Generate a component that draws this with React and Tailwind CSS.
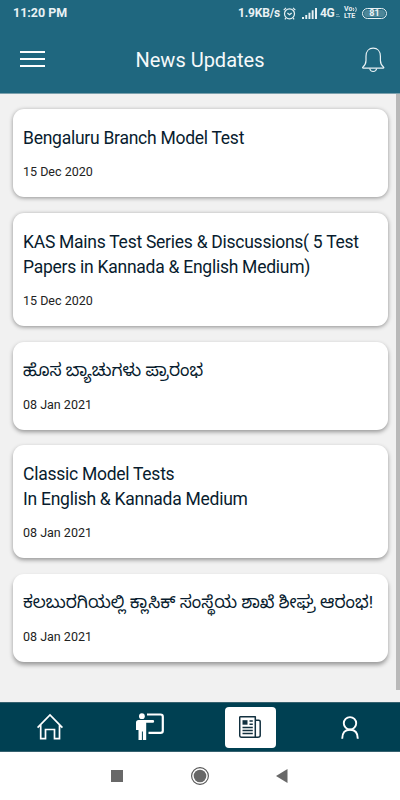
const news = [
  { lines: ['Bengaluru Branch Model Test'], date: '15 Dec 2020', title: 'text-[17.5px] tracking-[-0.26px]', shadow: 'shadow-[0_1px_4px_rgba(0,0,0,0.4)]' },
  { lines: ['KAS Mains Test Series & Discussions( 5 Test', 'Papers in Kannada & English Medium)'], date: '15 Dec 2020', title: 'text-[17.5px] tracking-[-0.26px]', shadow: 'shadow-[0_1px_4px_rgba(0,0,0,0.42)]' },
  { lines: ['ಹೊಸ ಬ್ಯಾಚುಗಳು ಪ್ರಾರಂಭ'], date: '08 Jan 2021', title: 'text-[17.1px] -mt-px mb-px', shadow: 'shadow-[0_2px_4px_rgba(0,0,0,0.38)]' },
  { lines: ['Classic Model Tests', 'In English & Kannada Medium'], date: '08 Jan 2021', title: 'text-[17.5px] tracking-[-0.26px]', shadow: 'shadow-[0_2px_4px_rgba(0,0,0,0.38)]' },
  { lines: ['ಕಲಬುರಗಿಯಲ್ಲಿ ಕ್ಲಾಸಿಕ್ ಸಂಸ್ಥೆಯ ಶಾಖೆ ಶೀಘ್ರ ಆರಂಭ!'], date: '08 Jan 2021', title: 'text-[17.1px] -mt-px mb-px', shadow: 'shadow-[0_3px_4px_rgba(0,0,0,0.36)]' },
];

function StatusBar() {
  return (
    <div className="flex h-[26px] items-center font-bold text-[#e9f1f4]">
      <span className="ml-[13px] w-[225px] text-[12.5px] whitespace-nowrap">11:20 PM</span>
      <span className="w-[45px] text-[12px] tracking-[-0.15px] whitespace-nowrap">1.9KB/s</span>
      <svg className="h-[13px] w-[13px] shrink-0" viewBox="0 0 13 13" fill="none" stroke="currentColor" strokeWidth="1.2">
        <circle cx="6.5" cy="6.8" r="5" />
        <path d="M.7 3.1 3 .9M12.3 3.1 10 .9M4.4 6l2.1 1.8L8.7 6M2.8 11.2l-.9 1.2M10.2 11.2l.9 1.2" />
      </svg>
      <svg className="ml-[6px] h-[11px] w-[15px] shrink-0" viewBox="0 0 15 11" fill="currentColor">
        <path d="M0 9h2v2H0zM3.3 7h1.9v4H3.3zM6.5 4.7h1.9V11H6.500zM9.7 2.3h1.9V11H9.700zM13 0h2v11h-2z" />
      </svg>
      <span className="ml-[3px] w-[15px] text-[12px] tracking-[-0.5px]">4G</span>
      <svg className="ml-px h-[5px] w-[4px] shrink-0 translate-y-[2px] opacity-40" viewBox="0 0 4 5" fill="currentColor">
        <path d="M0 1h3v1H0zM0 3h4v1H0z" />
      </svg>
      <span className="ml-[4px] flex w-[13px] flex-col whitespace-nowrap text-[7px] leading-[7px]">
        <span className="flex h-[6px] items-center">
          Vo
          <svg className="ml-[0.5px] h-[5px] w-[4px] shrink-0" viewBox="0 0 4 5" fill="none" stroke="currentColor" strokeWidth="0.9">
            <path d="M.3.8q1.200 1.700 0 3.400M2.600.2q1.500 2.300 0 4.600" />
          </svg>
        </span>
        <span>LTE</span>
      </span>
      <span className="ml-[5px] flex h-[11px] w-[25px] items-center justify-center rounded-full border border-[#e9f1f4] p-px">
        <span className="flex h-full w-full items-center justify-center rounded-full bg-[#4d8698] text-[9px] leading-none">81</span>
      </span>
    </div>
  );
}

function Header() {
  return (
    <header className="h-[94px] shrink-0 border-b border-[#7ca1ad] bg-[#1f677f]">
      <StatusBar />
      <div className="flex h-[67px] items-center px-[20px]">
        <div className="flex w-[25px] flex-col gap-[5px] pb-[1px]">
          <div className="h-[2px] bg-white" />
          <div className="h-[2px] bg-white" />
          <div className="h-[2px] bg-white" />
        </div>
        <h1 className="flex-1 pr-[6px] text-center text-[20px] text-[#f5f9fa]">News Updates</h1>
        <svg className="-mr-[5px] h-[26px] w-[24px]" viewBox="0 0 24 26" fill="none" stroke="#eaf2f5" strokeWidth="1.2" strokeLinejoin="round">
          <path d="M1.6 20.4c2.5-2.2 3.4-4 3.400-7V9.200C5 4.300 8 1.200 12.200 1.200s7.200 3.100 7.200 8v4.200c0 3 .9 4.800 3.400 7 .1.500-.1.800-.6.800h-20c-.5 0-.7-.3-.6-.8Z" />
          <path d="M8.700 21.500c.4 2 1.700 3 3.500 3s3.100-1 3.500-3" />
        </svg>
      </div>
    </header>
  );
}

function Card({ item }) {
  return (
    <article className={`flex flex-col rounded-[11px] bg-white px-[10.5px] pt-[17px] pb-[15px] ${item.shadow}`}>
      <h2 className={`leading-[25px] whitespace-nowrap text-[#081c2e] ${item.title}`}>
        {item.lines.map((line) => (
          <span className="block" key={line}>{line}</span>
        ))}
      </h2>
      <p className="mt-[11px] text-[12.5px] leading-[20px] text-[#222]">{item.date}</p>
    </article>
  );
}

function TabBar() {
  return (
    <nav className="grid h-[50px] shrink-0 grid-cols-4 items-center justify-items-center border-y border-[#35616f] bg-[#004052]">
      <svg className="mb-[2px] h-[28px] w-[28px]" viewBox="0 0 28 28" fill="none" stroke="white" strokeWidth="1.7">
        <path d="M1.6 15.7 14 3l12.4 12.7M4.7 13v13.7h4.8v-9.200h9v9.200h5V13" />
      </svg>
      <svg className="h-[28px] w-[28px]" viewBox="0 0 28 28" fill="white">
        <circle cx="5.9" cy="3.2" r="2.9" />
        <path d="M2.5 7h14.7c1.3 0 1.3 2.7 0 2.7H10.2V27H6.9v-8.6h-1V27H2.500V17H0V9.500C0 8 1 7 2.500 7Z" />
        <path d="M11 1.500h13.500c1.700 0 2.300.7 2.300 2.200v14c0 1.500-.6 2.200-2.300 2.200H12.500" fill="none" stroke="white" strokeWidth="2.2" />
      </svg>
      <div className="flex h-[41px] w-[51px] items-center justify-center rounded-[4px] bg-white">
        <svg className="h-[22px] w-[22px]" viewBox="0 0 22 22" fill="none" stroke="#12303f" strokeWidth="1.5" strokeLinejoin="round">
          <path d="M1.500.8h14.800v20.400H2.500c-1.200 0-1.800-.7-1.800-1.800V1.500c0-.4.300-.7.800-.7ZM16.300 4.300h3.500c1 0 1.400.4 1.400 1.200v14c0 1.200-.8 1.700-2.400 1.700h-2.500" />
          <path d="M10.500 5h3.300M10.500 8.200h3.300M3.500 11.600h10.300M3.500 14.600h10.300M3.500 17.600h10.300" />
          <path d="M3.500 4.200h5v4.500h-5z" fill="#12303f" stroke="none" />
        </svg>
      </div>
      <svg className="h-[23px] w-[18px]" viewBox="0 0 18 23" fill="none" stroke="white" strokeWidth="1.9">
        <circle cx="9" cy="7.3" r="6.200" />
        <path d="M1.200 22.700C1.200 16.500 4 13.700 9 13.700s7.800 2.800 7.800 9" />
      </svg>
    </nav>
  );
}

function SystemBar() {
  return (
    <div className="flex h-[48px] shrink-0 items-center bg-white">
      <div className="ml-[111px] h-[12px] w-[12px] bg-[#686868]" />
      <svg className="ml-[68px] h-[18px] w-[18px]" viewBox="0 0 18 18">
        <circle cx="9" cy="9" r="8.4" fill="none" stroke="#555" strokeWidth="1.1" />
        <circle cx="9" cy="9" r="6.3" fill="#686868" />
      </svg>
      <svg className="ml-[67px] h-[14px] w-[12px]" viewBox="0 0 12 14" fill="#686868">
        <path d="M0 7 11.5 0v14Z" />
      </svg>
    </div>
  );
}

export default function App() {
  return (
    <div className="flex h-[800px] w-[400px] flex-col overflow-hidden bg-[#f1f1f1] font-[Roboto,'Noto_Sans_Kannada','Noto_Sans',sans-serif]">
      <Header />
      <main className="flex min-h-0 flex-1 justify-between">
        <div className="ml-[12.5px] flex w-[375px] flex-col gap-[15.7px] pt-[15.2px]">
          {news.map((item) => (
            <Card item={item} key={item.lines[0]} />
          ))}
        </div>
        <div className="h-[596px] w-[4px] bg-[#b9b9b9]" />
      </main>
      <TabBar />
      <SystemBar />
    </div>
  );
}
